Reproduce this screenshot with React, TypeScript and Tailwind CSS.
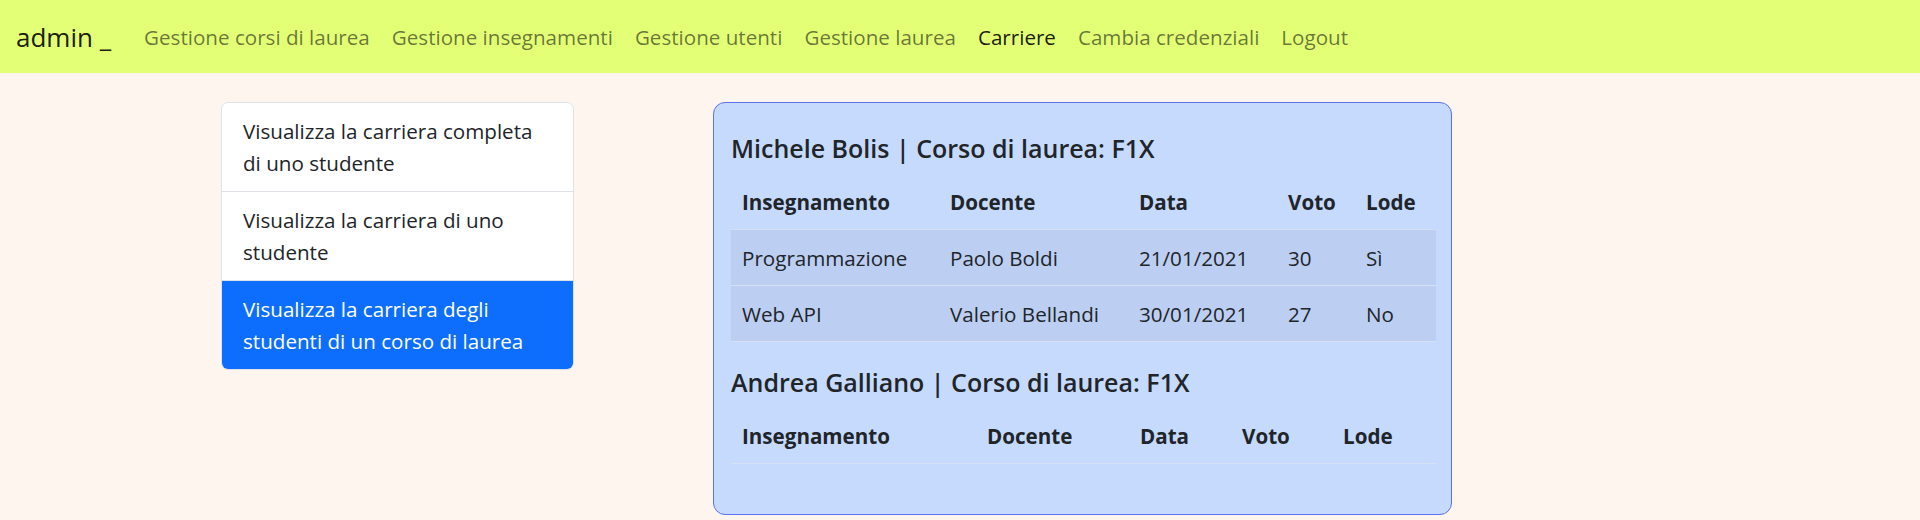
import React from 'react';

const navLinks = [
  { label: 'Gestione corsi di laurea' },
  { label: 'Gestione insegnamenti' },
  { label: 'Gestione utenti' },
  { label: 'Gestione laurea' },
  { label: 'Carriere', active: true },
  { label: 'Cambia credenziali' },
  { label: 'Logout' },
];

const menu = [
  'Visualizza la carriera completa di uno studente',
  'Visualizza la carriera di uno studente',
  'Visualizza la carriera degli studenti di un corso di laurea',
];

type Esame = { insegnamento: string; docente: string; data: string; voto: string; lode: string };

const carriere: { studente: string; corso: string; cols: string[]; esami: Esame[] }[] = [
  {
    studente: 'Michele Bolis',
    corso: 'F1X',
    cols: ['w-[208px]', 'w-[189px]', 'w-[149px]', 'w-[78px]', 'w-[81px]'],
    esami: [
      { insegnamento: 'Programmazione', docente: 'Paolo Boldi', data: '21/01/2021', voto: '30', lode: 'Sì' },
      { insegnamento: 'Web API', docente: 'Valerio Bellandi', data: '30/01/2021', voto: '27', lode: 'No' },
    ],
  },
  {
    studente: 'Andrea Galliano',
    corso: 'F1X',
    cols: ['w-[245px]', 'w-[153px]', 'w-[102px]', 'w-[101px]', 'w-[104px]'],
    esami: [],
  },
];

const headers = ['Insegnamento', 'Docente', 'Data', 'Voto', 'Lode'];

export default function App() {
  return (
    <div className="min-h-[520px] bg-[#fef5ee] text-[#212529] font-['Open_Sans',sans-serif] text-[20.6px] leading-[32px]">
      <nav className="h-[73px] bg-[#e2ff76] flex items-center px-[16px]">
        <span className="text-[26px] text-black/90 mr-[22px]">admin _</span>
        <ul className="flex items-center">
          {navLinks.map((l) => (
            <li key={l.label}>
              <a
                href="#"
                className={`block px-[11px] ${l.active ? 'text-black/90' : 'text-black/55'}`}
              >
                {l.label}
              </a>
            </li>
          ))}
        </ul>
      </nav>

      <div className="flex items-start pl-[221px] pt-[29px] gap-[139px]">
        <div className="w-[353px] bg-white border border-[#dee2e6] rounded-[7px] overflow-hidden">
          {menu.map((m, i) => (
            <div
              key={m}
              className={`px-[21px] py-[12px] ${i > 0 ? 'border-t border-[#dee2e6]' : ''} ${
                i === 2 ? 'bg-[#0d6efd] text-white border-[#0d6efd]' : ''
              }`}
            >
              {m}
            </div>
          ))}
        </div>

        <div className="w-[739px] h-[413px] bg-[#c6dafe] border border-[#5b72f2] rounded-[12px] pl-[17px] pr-[15px] pt-[29px]">
          {carriere.map((c) => (
            <section key={c.studente}>
              <h4 className="text-[25px] font-semibold leading-[32px] mb-[10px]">
                {c.studente} | Corso di laurea: {c.corso}
              </h4>
              <table className="w-full table-fixed border-collapse mb-[24px]">
                <thead>
                  <tr className="border-b border-[#d6e0f2]">
                    {headers.map((h, i) => (
                      <th key={h} className={`${c.cols[i]} text-left font-bold px-[11px] py-[11.5px]`}>
                        {h}
                      </th>
                    ))}
                  </tr>
                </thead>
                <tbody>
                  {c.esami.map((e) => (
                    <tr key={e.insegnamento} className="bg-[#bccff3] border-b border-[#d6e0f2]">
                      <td className="px-[11px] py-[11.5px]">{e.insegnamento}</td>
                      <td className="px-[11px] py-[11.5px]">{e.docente}</td>
                      <td className="px-[11px] py-[11.5px]">{e.data}</td>
                      <td className="px-[11px] py-[11.5px]">{e.voto}</td>
                      <td className="px-[11px] py-[11.5px]">{e.lode}</td>
                    </tr>
                  ))}
                </tbody>
              </table>
            </section>
          ))}
        </div>
      </div>
    </div>
  );
}
